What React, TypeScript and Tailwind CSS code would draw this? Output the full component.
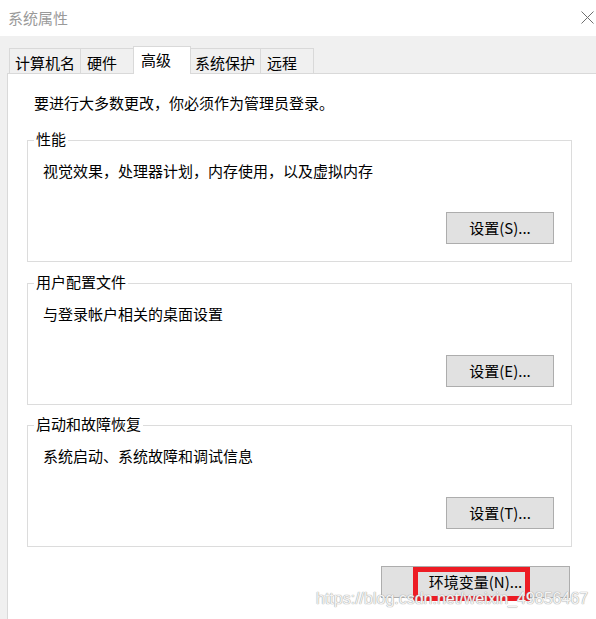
import React from 'react';

const font = { fontFamily: '"Noto Sans CJK SC", "Noto Sans", sans-serif' };

interface GroupProps {
  title: string;
  desc: string;
  button: string;
  className?: string;
}

function Tab({ label, className, active }: { label: string; className: string; active?: boolean }) {
  if (active) {
    return (
      <div
        className={`${className} h-[28px] -mb-px -ml-px relative z-10 bg-white border border-b-0 border-[#d9d9d9] flex pt-[3px] text-[15px] leading-[20px] text-black`}
      >
        {label}
      </div>
    );
  }
  return (
    <div
      className={`${className} h-[25px] -ml-px first:ml-0 bg-[#f0f0f0] border border-b-0 border-[#d9d9d9] flex pt-[4px] text-[15px] leading-[20px] text-black`}
    >
      {label}
    </div>
  );
}

function WinButton({ label, className = '' }: { label: string; className?: string }) {
  return (
    <div
      className={`h-[32px] bg-[#e1e1e1] border border-[#adadad] flex items-center justify-center text-[15px] leading-[20px] text-black ${className}`}
    >
      {label}
    </div>
  );
}

function GroupBox({ title, desc, button, className = '' }: GroupProps) {
  return (
    <div className={`relative w-[545px] h-[122px] border border-[#dcdcdc] flex flex-col ${className}`}>
      <span className="absolute left-[6px] top-[-12px] px-[2px] bg-white text-[15px] leading-[20px] text-black">
        {title}
      </span>
      <p className="pt-[20px] pl-[15px] text-[15px] leading-[20px] text-black">{desc}</p>
      <WinButton label={button} className="w-[108px] self-end mt-auto mb-[17px] mr-[17px]" />
    </div>
  );
}

export default function App() {
  return (
    <div className="relative w-[596px] h-[619px] overflow-hidden bg-[#f0f0f0] flex flex-col" style={font}>
      {/* title bar */}
      <div className="h-[36px] bg-white flex items-center justify-between pl-[8px] pr-[2px] shrink-0">
        <span className="text-[15px] leading-[20px] text-[#9a9a9a] mt-[-1px]">系统属性</span>
        <svg width="13" height="13" viewBox="0 0 13 13" className="mt-[-1px]">
          <path d="M0.5 0.5 L12.5 12.5 M12.5 0.5 L0.5 12.5" stroke="#6f6f6f" strokeWidth="1" fill="none" />
        </svg>
      </div>

      {/* tabs */}
      <div className="h-[37px] flex items-end pl-[9px] shrink-0">
        <Tab label="计算机名" className="w-[72px] pl-[5px]" />
        <Tab label="硬件" className="w-[54px] pl-[6px]" />
        <Tab label="高级" className="w-[58px] pl-[7px]" active />
        <Tab label="系统保护" className="w-[71px] pl-[4px]" />
        <Tab label="远程" className="w-[54px] pl-[6px]" />
      </div>

      {/* panel */}
      <div className="flex-1 ml-[7px] bg-white border-l border-t border-[#d9d9d9] pl-[19px] flex flex-col">
        <p className="pt-[19px] pl-[7px] text-[15px] leading-[20px] text-black">
          要进行大多数更改，你必须作为管理员登录。
        </p>
        <GroupBox
          className="mt-[27px]"
          title="性能"
          desc="视觉效果，处理器计划，内存使用，以及虚拟内存"
          button="设置(S)..."
        />
        <GroupBox className="mt-[21px]" title="用户配置文件" desc="与登录帐户相关的桌面设置" button="设置(E)..." />
        <GroupBox
          className="mt-[20px]"
          title="启动和故障恢复"
          desc="系统启动、系统故障和调试信息"
          button="设置(T)..."
        />
        <div className="relative w-[189px] ml-[354px] mt-[19px]">
          <WinButton label="环境变量(N)..." className="w-[189px]" />
          <div className="absolute left-[32px] top-px w-[117px] h-[34px] border-[5px] border-[#ed1c24]" />
        </div>
      </div>

      {/* watermark */}
      <span
        className="absolute left-[316px] top-[590px] text-[16px] leading-[18px] text-[#f4f4f4] whitespace-nowrap [text-shadow:0_0_1px_#a0a0a0,0_0_1px_#a0a0a0]"
        style={{ fontFamily: '"Liberation Sans", Arial, sans-serif' }}
      >
        https://blog.csdn.net/weixin_49856467
      </span>
    </div>
  );
}
